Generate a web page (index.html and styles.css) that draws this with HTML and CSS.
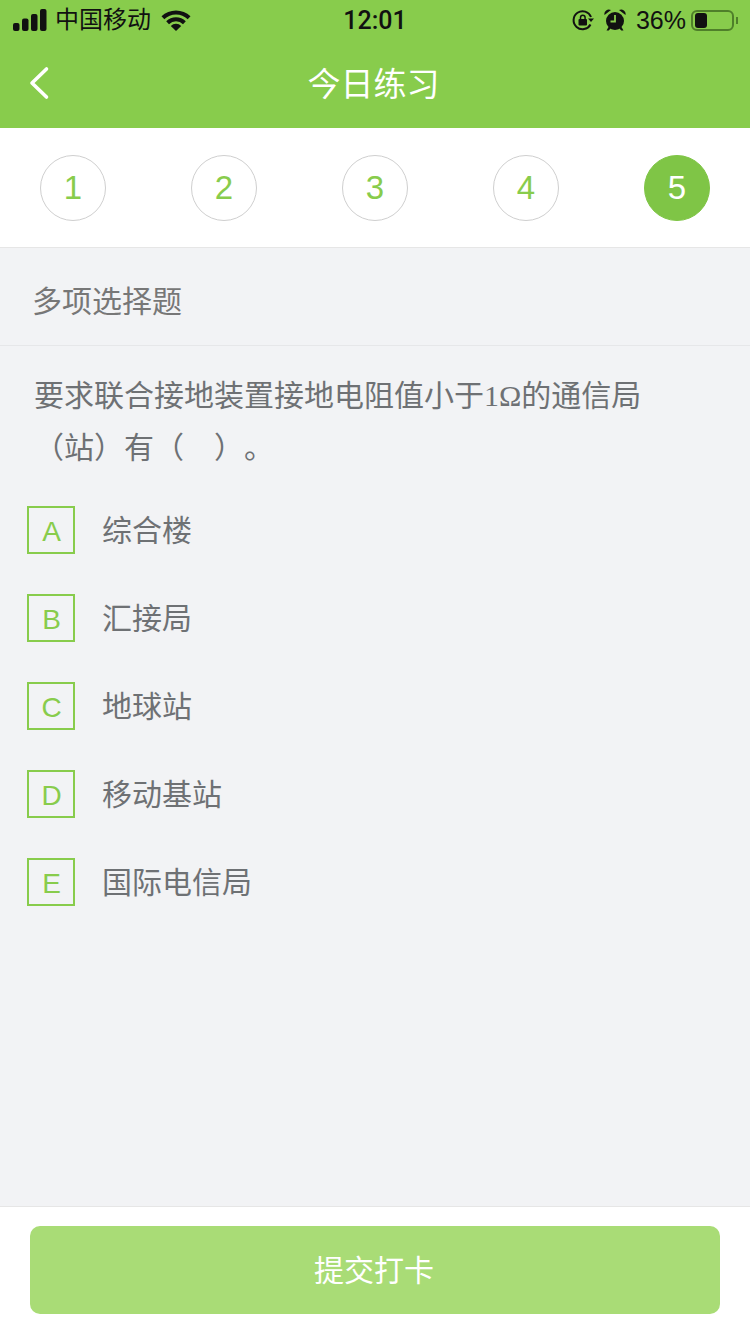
FILE: index.html
```html
<!DOCTYPE html>
<html lang="zh-CN">
<head>
  <meta charset="UTF-8" />
  <meta name="viewport" content="width=device-width, initial-scale=1.0"/>
  <title>今日练习</title>
  <link rel="stylesheet" href="styles.css">
</head>
<body>
  <div class="page">
    <header class="top">
      <div class="status">
        <div class="status-left">
          <svg class="signal" width="34" height="22" viewBox="0 0 34 22"><rect x="0" y="14" width="6.500" height="8" rx="2"/><rect x="9" y="9.500" width="6.500" height="12.500" rx="2"/><rect x="18" y="5" width="6.500" height="17" rx="2"/><rect x="27" y="0" width="6.500" height="22" rx="2"/></svg>
          <span class="carrier">中国移动</span>
          <svg class="wifi" width="30" height="22" viewBox="0 0 30 22"><path d="M0.500 7.200a21 21 0 0 1 29 0l-2.800 3a17 17 0 0 0-23.400 0z"/><path d="M5.200 12.200a14 14 0 0 1 19.600 0l-2.800 3a10 10 0 0 0-14 0z"/><path d="M9.800 17a7 7 0 0 1 10.400 0L15 22z"/></svg>
        </div>
        <span class="time">12:01</span>
        <div class="status-right">
          <svg class="lock" width="22" height="22" viewBox="0 0 22 22"><path d="M18.500 15.500A9 9 0 1 1 19 8" fill="none" stroke="#111" stroke-width="2"/><path d="M16 9.500h6l-3 3.500z"/><rect x="6.500" y="10" width="8.500" height="6.500" rx="1"/><path d="M8.500 10V8.500a2.300 2.300 0 0 1 4.600 0V10" fill="none" stroke="#111" stroke-width="1.500"/></svg>
          <svg class="alarm" width="22" height="24" viewBox="0 0 22 24"><circle cx="11" cy="13" r="9"/><path d="M0.500 7a4.500 4.500 0 0 1 6.500-5zM21.500 7a4.500 4.500 0 0 0-6.500-5zM4.500 19l-2 3.500h2.200l2.300-2.500zM17.500 19l2 3.500h-2.200l-2.300-2.500z"/><path d="M11 7v6.500H6.500" fill="none" stroke="#88cc4c" stroke-width="1.800"/></svg>
          <span class="battery-num">36%</span>
          <div class="battery"><div class="battery-level"></div></div>
          <div class="battery-tip"></div>
        </div>
      </div>
      <div class="nav">
        <svg class="back" width="22" height="34" viewBox="0 0 22 34"><path d="M18.500 3 L4 17 L18.500 31" fill="none" stroke="#fff" stroke-width="3.600" stroke-linecap="round" stroke-linejoin="round"/></svg>
        <h1 class="nav-title">今日练习</h1>
      </div>
    </header>

    <div class="steps">
      <div class="step">1</div>
      <div class="step">2</div>
      <div class="step">3</div>
      <div class="step">4</div>
      <div class="step step-on">5</div>
    </div>

    <main class="content">
      <div class="type">多项选择题</div>
      <div class="question">要求联合接地装置接地电阻值小于<span class="latin">1Ω</span>的通信局<br>（站）有（　）。</div>
      <div class="options">
        <div class="option"><span class="letter">A</span><span class="option-text">综合楼</span></div>
        <div class="option"><span class="letter">B</span><span class="option-text">汇接局</span></div>
        <div class="option"><span class="letter">C</span><span class="option-text">地球站</span></div>
        <div class="option"><span class="letter">D</span><span class="option-text">移动基站</span></div>
        <div class="option"><span class="letter">E</span><span class="option-text">国际电信局</span></div>
      </div>
    </main>

    <footer class="bottom">
      <button class="submit">提交打卡</button>
    </footer>
  </div>
</body>
</html>
```

FILE: styles.css
```css
* {
  box-sizing: border-box;
}
body {
  margin: 0;
  font-family: 'Liberation Sans', 'Noto Sans CJK SC', sans-serif;
  background: #f2f3f5;
  text-spacing-trim: space-all;
}
.page {
  width: 750px;
  height: 1334px;
  display: flex;
  flex-direction: column;
  overflow: hidden;
}
.top {
  height: 128px;
  background: #88cc4c;
  flex: none;
}
.status {
  height: 40px;
  display: flex;
  align-items: center;
  justify-content: space-between;
  padding: 0 12px 0 13px;
  color: #111;
  position: relative;
}
.status-left, .status-right {
  display: flex;
  align-items: center;
}
.signal, .wifi, .lock, .alarm {
  fill: #111;
}
.carrier {
  font-size: 24px;
  line-height: 24px;
  margin-left: 8px;
}
.wifi {
  margin-left: 10px;
}
.time {
  position: absolute;
  left: 0;
  right: 0;
  text-align: center;
  font-family: Roboto, sans-serif;
  font-weight: 500;
  font-size: 25px;
}
.alarm {
  margin-left: 10px;
}
.battery-num {
  font-size: 25px;
  margin-left: 10px;
}
.battery {
  width: 43px;
  height: 21px;
  margin-left: 5px;
  border: 2px solid #4f7f2a;
  border-radius: 6px;
  padding: 1px 2px;
}
.battery-level {
  width: 12px;
  height: 15px;
  background: #111;
  border-radius: 3px;
}
.battery-tip {
  width: 2px;
  height: 7px;
  margin-left: 2px;
  background: #4f7f2a;
}
.nav {
  height: 88px;
  display: flex;
  align-items: center;
  justify-content: center;
  position: relative;
}
.back {
  position: absolute;
  left: 28px;
  top: 26px;
}
.nav-title {
  margin: 0 3px 4px 0;
  font-size: 33px;
  font-weight: normal;
  color: #fff;
}
.steps {
  height: 120px;
  flex: none;
  background: #fff;
  border-bottom: 1px solid #e6e6e6;
  padding: 0 40px;
  display: flex;
  align-items: center;
  justify-content: space-between;
}
.step {
  width: 66px;
  height: 66px;
  border: 1px solid #cfcfcf;
  border-radius: 50%;
  display: flex;
  align-items: center;
  justify-content: center;
  font-size: 33px;
  color: #88cc4c;
}
.step-on {
  background: #7fc546;
  border-color: #7fc546;
  color: #fff;
}
.content {
  flex: 1;
}
.type {
  height: 98px;
  padding: 4px 32px 0;
  border-bottom: 1px solid #e6e7e9;
  display: flex;
  align-items: center;
  font-size: 30px;
  color: #777;
}
.question {
  padding: 24px 30px 0 34px;
  font-size: 30px;
  line-height: 52px;
  color: #6e7174;
}
.latin {
  font-family: 'Liberation Serif', serif;
}
.options {
  padding: 12px 0 0 27px;
}
.option {
  height: 88px;
  display: flex;
  align-items: center;
}
.letter {
  width: 48px;
  height: 48px;
  padding: 3px 0 0 1px;
  border: 2px solid #88cc4c;
  display: flex;
  align-items: center;
  justify-content: center;
  font-size: 28px;
  color: #88cc4c;
}
.option-text {
  margin-left: 27px;
  padding-top: 1px;
  font-size: 30px;
  line-height: 40px;
  color: #6e7174;
}
.bottom {
  height: 128px;
  flex: none;
  background: #fff;
  border-top: 1px solid #e6e6e6;
  padding: 19px 30px 0;
}
.submit {
  display: block;
  width: 100%;
  height: 88px;
  padding: 0 2px 4px 0;
  border: none;
  border-radius: 10px;
  background: #a9dc76;
  color: #fff;
  font-family: inherit;
  font-size: 30px;
}
```
